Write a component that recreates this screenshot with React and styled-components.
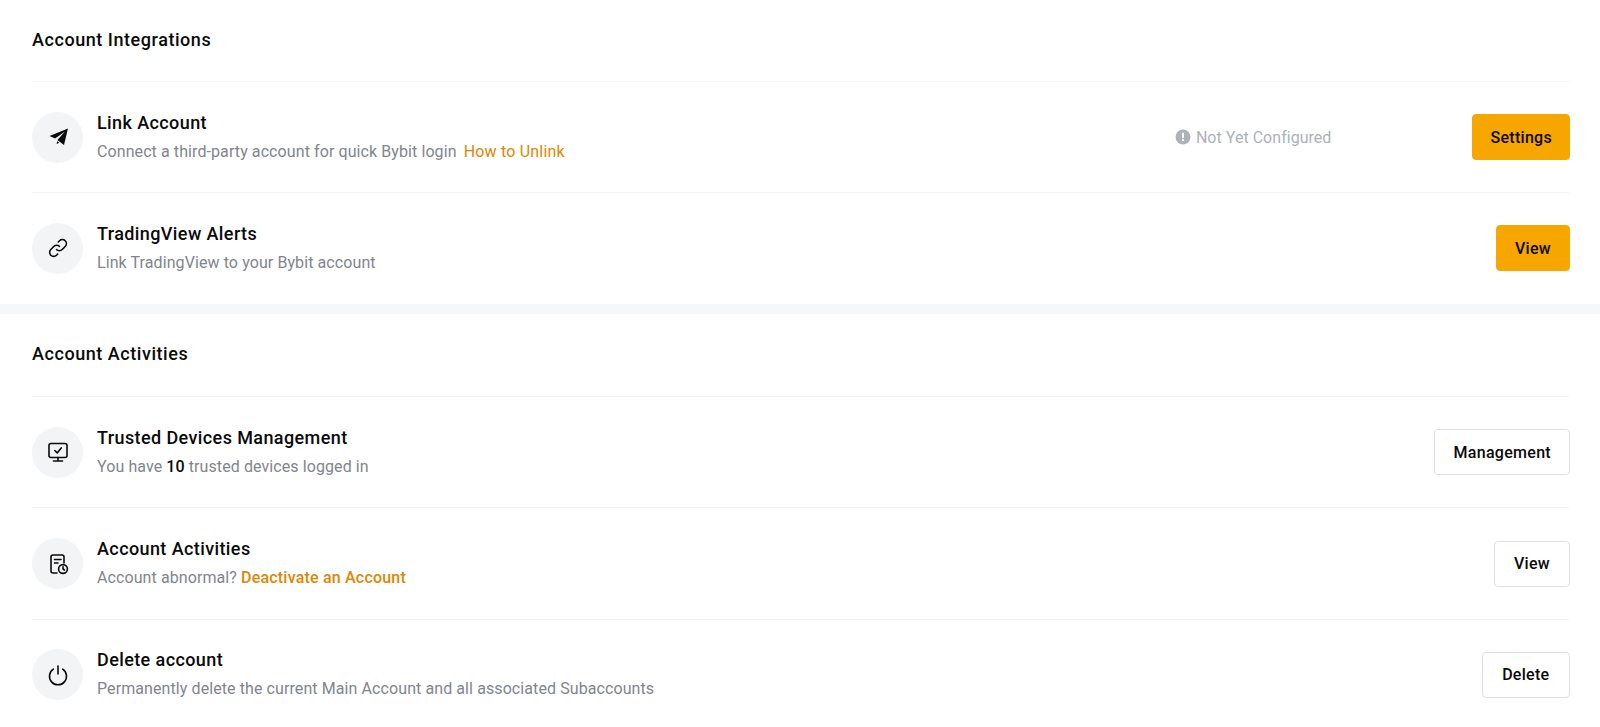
import React from "react";
import styled, { createGlobalStyle } from "styled-components";

const Global = createGlobalStyle`
  html, body { margin: 0; padding: 0; background: #fff; }
  body { font-family: "Roboto", "Liberation Sans", sans-serif; color: #0a0a0a; }
`;
const Page = styled.div`display: flex; flex-direction: column; width: 1600px; height: 727px; overflow: hidden;`;
const Section = styled.section`padding: 0 30px 0 32px;`;
const Band = styled.div`height: 10px; background: #f6f7fb; flex: none;`;
const Header = styled.h2`
  margin: 0; height: ${p => p.$h}px; display: flex; align-items: center; padding-bottom: ${p => p.$pb}px; box-sizing: content-box;
  border-bottom: 1px solid #f3f4f6; font-size: 18px; font-weight: 500; letter-spacing: 0.55px;
`;
const Row = styled.div`
  display: flex; align-items: center; height: 110.3px; border-bottom: ${p => p.$last ? "none" : "1px solid #f3f4f6"};
`;
const IconCircle = styled.div`
  width: 51px; height: 51px; flex: none; border-radius: 50%; background: #f3f4f6;
  display: flex; align-items: center; justify-content: center; margin-right: 14px;
  svg { display: block; }
`;
const Body = styled.div`flex: 1; min-width: 0; display: flex; flex-direction: column; gap: 7px;`;
const Title = styled.div`font-size: 18px; line-height: 22px; font-weight: 500; letter-spacing: 0.4px;`;
const Desc = styled.div`font-size: 16px; line-height: 22px; color: #81858c; letter-spacing: 0.09px;
  b { color: #0a0a0a; font-weight: 500; }`;
const Link = styled.a`color: #e08600; letter-spacing: 0.2px; margin-left: ${p => p.$bold ? 0 : 3}px; font-weight: ${p => p.$bold ? 500 : 400};`;
const Status = styled.div`
  display: flex; align-items: center; gap: 5px; color: #adb1b8; font-size: 16px; letter-spacing: 0.03px; margin-right: 141px;
`;
const Button = styled.button`
  height: 46px; padding: 0 ${p => p.$pad || 18}px; box-sizing: border-box; border-radius: 4px; cursor: pointer;
  font: 500 16px "Roboto", "Liberation Sans", sans-serif; letter-spacing: 0.3px; color: #0a0a0a;
  background: ${p => p.$primary ? "#f7a600" : "#fff"};
  border: 1px solid ${p => p.$primary ? "#f7a600" : "#dce0e5"};
`;

const Svg = ({ children, size = 24 }) => (
  <svg width={size} height={size} viewBox="0 0 24 24" fill="none" stroke="#0a0a0a" strokeWidth="1.6" strokeLinecap="round" strokeLinejoin="round">{children}</svg>
);
const Plane = () => (
  <svg width="24" height="24" viewBox="0 0 24 24"><path fill="#0a0a0a" d="M22 3.5 3.5 11l5.6 2.6L19 6.5l-7.6 8.6 6.6 5L22 3.5Zm-10.8 12.7-.6 2.7 2.6-1.1-2-1.6Z" /></svg>
);
const Chain = () => (
  <Svg><path d="M10.5 13.5a4 4 0 0 0 5.7 0l3-3a4 4 0 0 0-5.7-5.7l-1.2 1.2" /><path d="M13.5 10.5a4 4 0 0 0-5.7 0l-3 3a4 4 0 0 0 5.7 5.7l1.2-1.2" /></Svg>
);
const Monitor = () => (
  <Svg><rect x="3" y="3.5" width="18" height="14" rx="2" /><path d="M12 17.5v3.5M7.5 21h9" /><path d="m8.8 10.5 2.4 2.4 4-5" /></Svg>
);
const Activity = () => (
  <Svg><path d="M11 21H7a2 2 0 0 1-2-2V5a2 2 0 0 1 2-2h9a2 2 0 0 1 2 2v6" /><path d="M8.5 7.5H15M8.5 11H12" /><circle cx="17" cy="17" r="4.4" /><path d="M17 14.8V17l1.5 1" /></Svg>
);
const Power = () => (
  <Svg><path d="M12 3v8" /><path d="M7.3 6.2a8.5 8.5 0 1 0 9.4 0" /></Svg>
);
const Alert = () => (
  <svg width="16" height="16" viewBox="0 0 16 16"><circle cx="8" cy="8" r="7.5" fill="#adb1b8" /><rect x="7" y="3.6" width="2" height="5.6" rx="1" fill="#fff" /><circle cx="8" cy="11.2" r="1.1" fill="#fff" /></svg>
);

export default function App() {
  return (
    <Page>
      <Global />
      <Section>
        <Header $h={78} $pb={3}>Account Integrations</Header>
        <Row>
          <IconCircle><Plane /></IconCircle>
          <Body>
            <Title>Link Account</Title>
            <Desc>Connect a third-party account for quick Bybit login <Link>How to Unlink</Link></Desc>
          </Body>
          <Status><Alert />Not Yet Configured</Status>
          <Button $primary $pad={17}>Settings</Button>
        </Row>
        <Row $last>
          <IconCircle><Chain /></IconCircle>
          <Body>
            <Title>TradingView Alerts</Title>
            <Desc>Link TradingView to your Bybit account</Desc>
          </Body>
          <Button $primary>View</Button>
        </Row>
      </Section>
      <Band />
      <Section>
        <Header $h={80.5} $pb={2}>Account Activities</Header>
        <Row>
          <IconCircle><Monitor /></IconCircle>
          <Body>
            <Title>Trusted Devices Management</Title>
            <Desc>You have <b>10</b> trusted devices logged in</Desc>
          </Body>
          <Button>Management</Button>
        </Row>
        <Row>
          <IconCircle><Activity /></IconCircle>
          <Body>
            <Title>Account Activities</Title>
            <Desc>Account abnormal? <Link $bold>Deactivate an Account</Link></Desc>
          </Body>
          <Button $pad={19}>View</Button>
        </Row>
        <Row $last>
          <IconCircle><Power /></IconCircle>
          <Body>
            <Title>Delete account</Title>
            <Desc>Permanently delete the current Main Account and all associated Subaccounts</Desc>
          </Body>
          <Button $pad={19.5}>Delete</Button>
        </Row>
      </Section>
    </Page>
  );
}
